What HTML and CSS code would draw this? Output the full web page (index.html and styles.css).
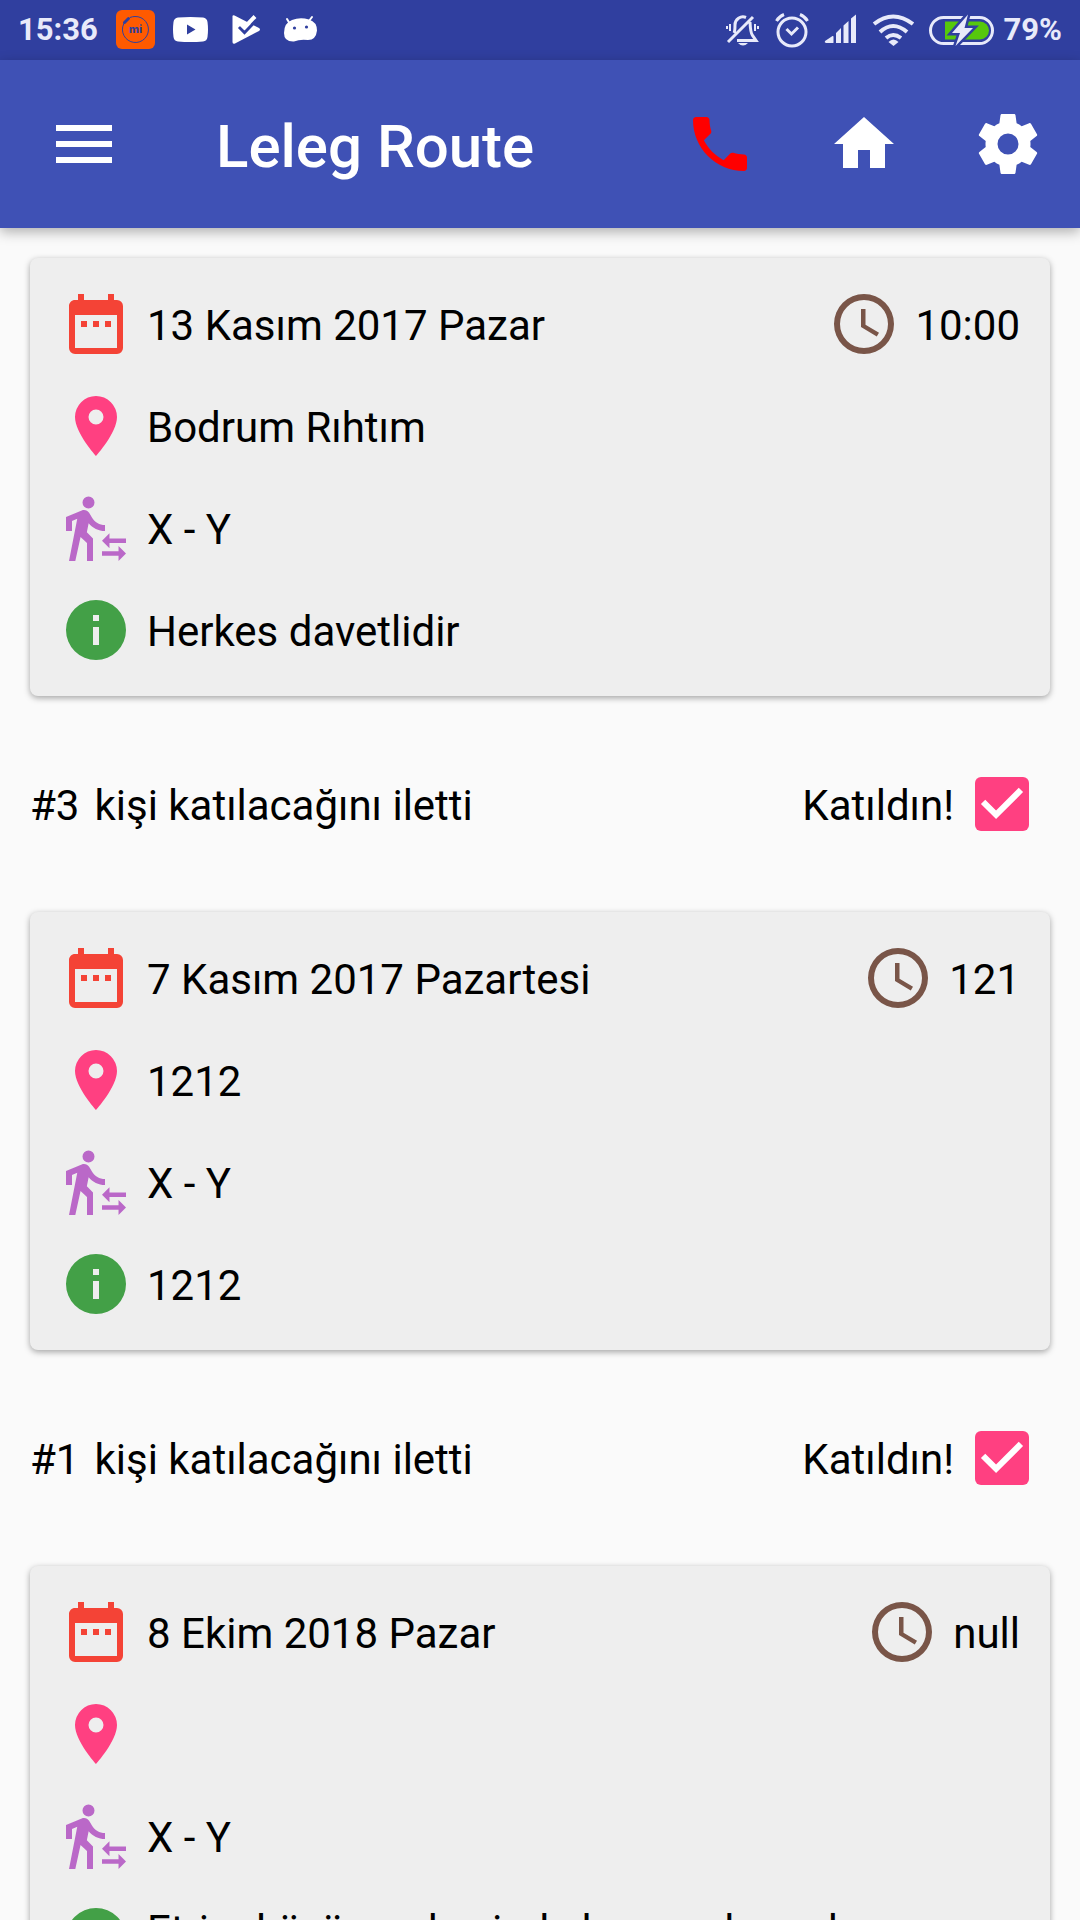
FILE: index.html
```html
<!DOCTYPE html>
<html lang="tr">
  <head>
    <meta charset="UTF-8" />
    <meta name="viewport" content="width=device-width, initial-scale=1.0" />
    <title>Leleg Route</title>
    <link rel="stylesheet" href="styles.css" />
  </head>
  <body>
    <!-- shared icons -->
    <svg class="sprite" aria-hidden="true">
      <symbol id="calendar" viewBox="0 0 24 24">
        <path d="M9,11H7V13H9V11M13,11H11V13H13V11M17,11H15V13H17V11M19,4H18V2H16V4H8V2H6V4H5C3.89,4 3,4.9 3,6V20A2,2 0 0,0 5,22H19A2,2 0 0,0 21,20V6A2,2 0 0,0 19,4M19,20H5V9H19V20Z" />
      </symbol>
      <symbol id="clock" viewBox="0 0 24 24">
        <path d="M12,20A8,8 0 0,0 20,12A8,8 0 0,0 12,4A8,8 0 0,0 4,12A8,8 0 0,0 12,20M12,2A10,10 0 0,1 22,12A10,10 0 0,1 12,22A10,10 0 0,1 2,12A10,10 0 0,1 12,2M12.5,7V12.25L17,14.92L16.25,16.15L11,13V7H12.5Z" />
      </symbol>
      <symbol id="place" viewBox="0 0 24 24">
        <path d="M12,11.5A2.5,2.5 0 0,1 9.5,9A2.5,2.5 0 0,1 12,6.5A2.5,2.5 0 0,1 14.5,9A2.5,2.5 0 0,1 12,11.5M12,2A7,7 0 0,0 5,9C5,14.25 12,22 12,22C12,22 19,14.25 19,9A7,7 0 0,0 12,2Z" />
      </symbol>
      <symbol id="walk" viewBox="0 0 24 24">
        <path d="M16.49,15.5V13.75L14,16.25L16.49,18.75V17H22V15.5H16.49M19.51,19.75H14V21.25H19.51V23L22,20.5L19.51,18V19.75M9.5,5.5A2,2 0 0,0 11.5,3.5A2,2 0 0,0 9.5,1.5A2,2 0 0,0 7.5,3.5A2,2 0 0,0 9.5,5.5M5.75,8.9L3,23H5.1L6.85,15L9,17V23H11V15.5L8.95,13.4L9.55,10.4C10.85,12 12.8,13 15,13V11C13.15,11 11.55,10 10.7,8.55L9.7,6.95C9.35,6.35 8.7,6 8,6C7.75,6 7.5,6 7.25,6.15L2,8.3V13H4V9.65L5.75,8.9" />
      </symbol>
      <symbol id="info" viewBox="0 0 24 24">
        <path d="M13,9H11V7H13M13,17H11V11H13M12,2A10,10 0 0,0 2,12A10,10 0 0,0 12,22A10,10 0 0,0 22,12A10,10 0 0,0 12,2Z" />
      </symbol>
    </svg>

    <div class="status-bar">
      <span class="time">15:36</span>
      <div class="notifications">
        <svg width="39" height="60" viewBox="0 0 39 60">
          <rect y="10" width="39" height="39" rx="6" fill="#ff5a00" />
          <path d="M11.5 19.2A13 13 0 1 0 19 16.5" fill="none" stroke="#303f9f" stroke-width="1" />
          <path d="M14 17.5A13 13 0 0 1 19 16.5" fill="none" stroke="#303f9f" stroke-width="1" />
          <path d="M8.5 22.5L12.5 18.5" stroke="#303f9f" stroke-width="3" stroke-linecap="round" />
          <text x="19.5" y="33" class="mi">mi</text>
        </svg>
        <svg width="35" height="60" viewBox="0 0 35 60">
          <path d="M5 17.5Q17.500 16.500 30 17.500Q34 18 34.500 22Q35.500 29.500 34.500 37Q34 41 30 41.500Q17.500 42.500 5 41.500Q1 41 .5 37Q-.5 29.500 .5 22Q1 18 5 17.500ZM14 24.500V34.500L22.500 29.500Z" fill="#fff" fill-rule="evenodd" />
        </svg>
        <svg width="40" height="60" viewBox="0 0 40 60">
          <path d="M6.500 16.500Q6.500 14.500 8.500 15.500L33 28Q35 29.500 33 31L9 43.500Q6.500 44.500 6.500 42Z" fill="#fff" />
          <path d="M22 18L29 14L33 18L26 24Z" fill="#303f9f" />
          <path d="M13 27L18.500 32.500L31 19.500" fill="none" stroke="#303f9f" stroke-width="3" />
          <path d="M15 24L18.500 27.500L29 16.500" fill="none" stroke="#fff" stroke-width="4" />
        </svg>
        <svg width="34" height="60" viewBox="0 0 34 60">
          <path d="M8 20Q16 17 25 19.500Q33 22 33 30.500Q32 40 24 40Q16 39 10 41.500Q0 42 0 33Q0 23 8 20Z" fill="#fff" />
          <path d="M6 24L3 19M25 21L28 17" stroke="#fff" stroke-width="2" stroke-linecap="round" />
          <circle cx="10.500" cy="28" r="1.600" fill="#303f9f" />
          <circle cx="22.500" cy="27" r="1.600" fill="#303f9f" />
        </svg>
      </div>
      <div class="system">
        <svg class="line" width="36" height="60" viewBox="0 0 36 60">
          <path d="M9 33Q10 31 10 25A8 8 0 0 1 21 17.500M25 22Q25.500 33 27.500 35.500L31 40.500H12M3 42L28 17" />
          <path d="M5 24V31M2 26V29M30 24V31M33 26V29" stroke-width="2" />
          <path d="M13 43H23Q18 48 13 43Z" class="solid" />
        </svg>
        <svg class="line" width="34" height="60" viewBox="0 0 34 60">
          <circle cx="17" cy="32" r="14" />
          <path d="M11.500 29L16.500 34L23 27.500" />
          <path d="M1.500 21Q4 16.500 9 14.500M25 14.500Q30 16.500 32.500 21" />
        </svg>
        <svg width="34" height="60" viewBox="0 0 34 60">
          <path class="solid" d="M2 41L9.500 36Q10.500 35.500 10.500 37V42.500Q10.500 43 10 43H3Q1 42.500 2 41ZM13 33L18 28V43H13ZM20.500 25.500L25.500 21V43H20.500ZM28 18.500L33 14.500V43H28Z" />
        </svg>
        <svg class="line" width="44" height="60" viewBox="0 0 44 60">
          <path d="M3 24Q22 9 42 24M9 32Q22 20 36 32M15 38Q22 32 30 38" stroke-width="4" />
          <path class="solid" d="M17.500 42Q22.500 37 27.500 42L22.500 46Z" />
        </svg>
        <svg width="66" height="60" viewBox="0 0 66 60">
          <rect x="1.500" y="17.500" width="62" height="26" rx="13" fill="none" stroke="#e8eafa" stroke-width="3" />
          <path d="M16 21.500H51A9 9 0 0 1 51 39.500H16Z" fill="#56c80c" />
          <path d="M39 14.500L23 33H31L26.500 46L44 28H35.500Z" fill="#e8eafa" stroke="#303f9f" stroke-width="5" paint-order="stroke" />
        </svg>
      </div>
      <span class="battery">79%</span>
    </div>

    <header class="app-bar">
      <button type="button" class="menu" aria-label="Menü">
        <svg width="56" height="38" viewBox="0 0 56 38">
          <path d="M0 0H56V6H0ZM0 16H56V22H0ZM0 32H56V38H0Z" />
        </svg>
      </button>
      <h1>Leleg Route</h1>
      <nav class="actions">
        <button type="button" class="call" aria-label="Ara">
          <svg class="icon" viewBox="0 0 24 24">
            <path d="M6.620 10.790c1.440 2.830 3.760 5.140 6.590 6.590l2.200-2.200c.27-.27.67-.36 1.020-.24 1.120.37 2.330.57 3.570.57.55 0 1 .45 1 1V20c0 .55-.45 1-1 1-9.390 0-17-7.610-17-17 0-.55.45-1 1-1h3.500c.55 0 1 .45 1 1 0 1.250.2 2.450.57 3.570.11.35.03.74-.25 1.020z" />
          </svg>
        </button>
        <button type="button" aria-label="Ana sayfa">
          <svg class="icon" viewBox="0 0 24 24">
            <path d="M10,20V14H14V20H19V12H22L12,3L2,12H5V20H10Z" />
          </svg>
        </button>
        <button type="button" aria-label="Ayarlar">
          <svg class="icon" viewBox="0 0 24 24">
            <path d="M12,15.5A3.5,3.5 0 0,1 8.5,12A3.5,3.5 0 0,1 12,8.5A3.5,3.5 0 0,1 15.5,12A3.5,3.5 0 0,1 12,15.5M19.43,12.97C19.47,12.65 19.5,12.33 19.5,12C19.5,11.67 19.47,11.34 19.43,11L21.54,9.37C21.73,9.22 21.78,8.95 21.66,8.73L19.66,5.27C19.54,5.05 19.27,4.96 19.05,5.05L16.56,6.05C16.04,5.66 15.5,5.32 14.87,5.07L14.5,2.42C14.46,2.18 14.25,2 14,2H10C9.75,2 9.54,2.18 9.5,2.42L9.13,5.07C8.5,5.32 7.96,5.66 7.44,6.05L4.95,5.05C4.73,4.96 4.46,5.05 4.34,5.27L2.34,8.73C2.21,8.95 2.27,9.22 2.46,9.37L4.57,11C4.53,11.34 4.5,11.67 4.5,12C4.5,12.33 4.53,12.65 4.57,12.97L2.46,14.63C2.27,14.78 2.21,15.05 2.34,15.27L4.34,18.73C4.46,18.95 4.73,19.03 4.95,18.95L7.44,17.94C7.96,18.34 8.5,18.68 9.13,18.93L9.5,21.58C9.54,21.82 9.75,22 10,22H14C14.25,22 14.46,21.82 14.5,21.58L14.87,18.93C15.5,18.67 16.04,18.34 16.56,17.94L19.05,18.95C19.27,19.03 19.54,18.95 19.66,18.73L21.66,15.27C21.78,15.05 21.73,14.78 21.54,14.63L19.43,12.97Z" />
          </svg>
        </button>
      </nav>
    </header>

    <main class="events">
      <article class="card">
        <div class="row">
          <svg class="icon date"><use href="#calendar" /></svg>
          <span>13 Kasım 2017 Pazar</span>
          <svg class="icon hour"><use href="#clock" /></svg>
          <span>10:00</span>
        </div>
        <div class="row">
          <svg class="icon location"><use href="#place" /></svg>
          <span>Bodrum Rıhtım</span>
        </div>
        <div class="row">
          <svg class="icon route"><use href="#walk" /></svg>
          <span>X - Y</span>
        </div>
        <div class="row">
          <svg class="icon about"><use href="#info" /></svg>
          <span>Herkes davetlidir</span>
        </div>
      </article>
      <div class="attendance">
        <span>#3</span>
        <span>kişi katılacağını iletti</span>
        <label for="join1">Katıldın!</label>
        <input type="checkbox" id="join1" checked />
      </div>

      <article class="card">
        <div class="row">
          <svg class="icon date"><use href="#calendar" /></svg>
          <span>7 Kasım 2017 Pazartesi</span>
          <svg class="icon hour"><use href="#clock" /></svg>
          <span>121</span>
        </div>
        <div class="row">
          <svg class="icon location"><use href="#place" /></svg>
          <span>1212</span>
        </div>
        <div class="row">
          <svg class="icon route"><use href="#walk" /></svg>
          <span>X - Y</span>
        </div>
        <div class="row">
          <svg class="icon about"><use href="#info" /></svg>
          <span>1212</span>
        </div>
      </article>
      <div class="attendance">
        <span>#1</span>
        <span>kişi katılacağını iletti</span>
        <label for="join2">Katıldın!</label>
        <input type="checkbox" id="join2" checked />
      </div>

      <article class="card">
        <div class="row">
          <svg class="icon date"><use href="#calendar" /></svg>
          <span>8 Ekim 2018 Pazar</span>
          <svg class="icon hour"><use href="#clock" /></svg>
          <span>null</span>
        </div>
        <div class="row">
          <svg class="icon location"><use href="#place" /></svg>
        </div>
        <div class="row">
          <svg class="icon route"><use href="#walk" /></svg>
          <span>X - Y</span>
        </div>
        <div class="row long">
          <svg class="icon about"><use href="#info" /></svg>
          <span>Etrim köyü merkezinde kuyusu kamelya</span>
        </div>
      </article>
    </main>
  </body>
</html>
```
FILE: styles.css
```css
* {
  box-sizing: border-box;
}

body {
  margin: 0;
  height: 100vh;
  display: flex;
  flex-direction: column;
  overflow: hidden;
  background-color: #fafafa;
  color: #000;
  font-family: Roboto, "Noto Sans", sans-serif;
  font-size: 42px;
  line-height: 50px;
}

svg {
  display: block;
  flex-shrink: 0;
}

button {
  padding: 0;
  border: none;
  background: none;
  color: #fff;
  cursor: pointer;
}

.sprite {
  display: none;
}

.icon {
  width: 72px;
  height: 72px;
  fill: currentColor;
}

/* status bar */
.status-bar {
  display: flex;
  flex-shrink: 0;
  align-items: center;
  height: 60px;
  padding: 0 18px;
  background-color: #303f9f;
  color: #e8eafa;
  font-size: 31px;
  font-weight: 700;
  line-height: 62px;
}

.notifications {
  display: flex;
  gap: 18px;
  margin-left: 18px;
}

.system {
  display: flex;
  gap: 14px;
  margin-left: auto;
  margin-right: 9px;
}

.line {
  fill: none;
  stroke: #e8eafa;
  stroke-width: 3px;
}

.line [stroke-width="2"] {
  stroke-width: 2px;
}

.line [stroke-width="4"] {
  stroke-width: 4px;
}

.solid {
  fill: #e8eafa;
  stroke: none;
}

.mi {
  fill: #303f9f;
  font-family: Inter, sans-serif;
  font-size: 11px;
  font-weight: 800;
  text-anchor: middle;
}

/* app bar */
.app-bar {
  position: relative;
  z-index: 1;
  display: flex;
  flex-shrink: 0;
  align-items: center;
  height: 168px;
  padding: 0 36px 0 56px;
  background-color: #3f51b5;
  box-shadow: 0 4px 12px rgba(0, 0, 0, 0.3);
}

.menu svg {
  fill: currentColor;
}

.app-bar h1 {
  margin: 0 0 0 104px;
  padding-top: 5px;
  color: #fff;
  font-size: 60px;
  font-weight: 500;
  line-height: 72px;
}

.actions {
  display: flex;
  gap: 72px;
  margin-left: auto;
}

.call {
  color: #ff0000;
}

/* event list */
.events {
  flex: 1;
  min-height: 0;
  padding: 30px;
  overflow: hidden;
}

.card {
  display: flex;
  flex-direction: column;
  gap: 30px;
  padding: 30px;
  border-radius: 8px;
  background-color: #eee;
  box-shadow: 0 2px 6px rgba(0, 0, 0, 0.35);
}

.row {
  display: flex;
  align-items: center;
  gap: 15px;
  min-height: 72px;
}

.row span,
.attendance span,
.attendance label {
  padding-top: 4px;
}

.long {
  align-items: flex-start;
}

.date {
  color: #f44336;
}

.hour {
  margin-left: auto;
  color: #795548;
}

.location {
  color: #ff4081;
}

.route {
  color: #ba68c8;
}

.about {
  color: #43a047;
}

.attendance {
  display: flex;
  align-items: center;
  gap: 15px;
  height: 216px;
  padding-right: 21px;
}

.attendance label {
  margin-left: auto;
}

.attendance input {
  display: grid;
  appearance: none;
  width: 54px;
  height: 54px;
  margin: 0 0 0 6px;
  border: 6px solid #757575;
  border-radius: 6px;
}

.attendance input:checked {
  border: none;
  background-color: #ff4081;
}

.attendance input:checked::before {
  content: "";
  background-color: #fff;
  clip-path: polygon(39% 78%, 11% 50%, 19% 42%, 39% 62%, 81% 20%, 89% 28%);
}
```
